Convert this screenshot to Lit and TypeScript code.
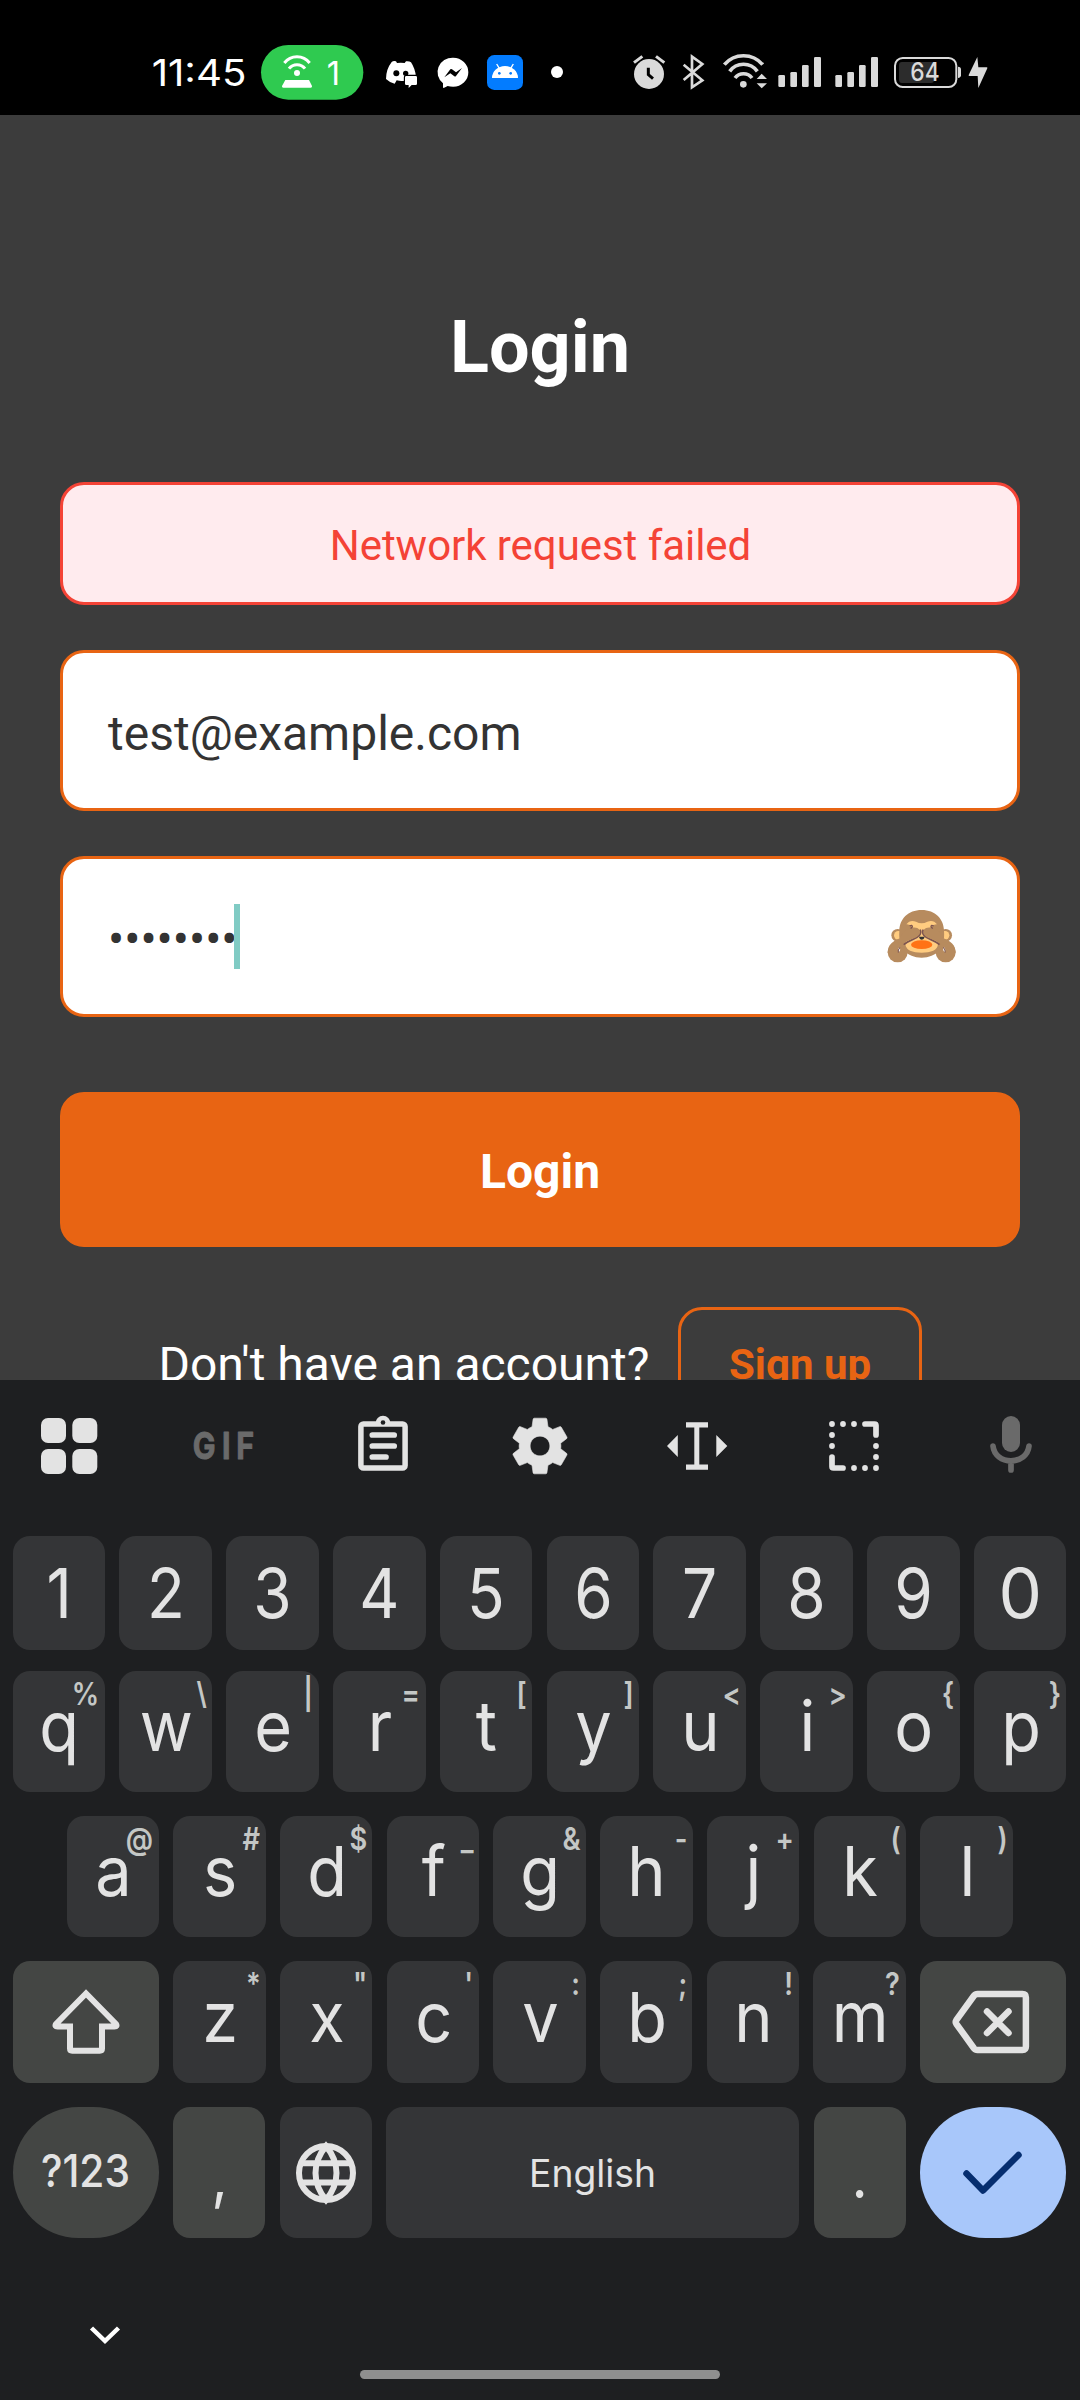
import { LitElement, html, svg, css, TemplateResult } from "lit";
import { customElement, property } from "lit/decorators.js";
import { styleMap } from "lit/directives/style-map.js";

/* ---------- status bar ---------- */

@customElement("status-bar")
class StatusBar extends LitElement {
  static styles = css`
    :host {
      display: flex;
      height: 115px;
      box-sizing: border-box;
      padding: 45px 0 0 150px;
      background: #000;
    }
    svg {
      display: block;
      flex: none;
    }
    text {
      font-family: Inter, Roboto, sans-serif;
    }
  `;

  /* one slice of the bar, from px a to px b, in a 3x finer coordinate system */
  private slice(a: number, b: number, origin: number, body: TemplateResult) {
    return html`<svg
      width=${b - a}
      height="55"
      viewBox="${(a - origin) * 3} 45 ${(b - a) * 3} 165"
    >
      ${body}
    </svg>`;
  }

  private bars(dx: number) {
    return svg`<g fill="#dadada" transform="translate(${dx} 0)">
      <rect x="595" y="135" width="20" height="36" rx="4" />
      <rect x="631" y="126" width="20" height="45" rx="4" />
      <rect x="666" y="105" width="20" height="66" rx="4" />
      <rect x="702" y="81" width="21" height="90" rx="4" />
    </g>`;
  }

  render() {
    const L = 130;
    const R = 580;
    return html`
      ${this.slice(150, 255, L, svg`<text x="65" y="167" font-size="110" fill="#fff" font-weight="400" textLength="284" lengthAdjust="spacingAndGlyphs">11:45</text>`)}
      ${this.slice(255, 375, L, svg`
        <rect x="393" y="45" width="307" height="164" rx="82" fill="#2fca50" />
        <g fill="none" stroke="#fff" stroke-width="9">
          <path d="M463 99A48 48 0 0 1 539 99" />
          <path d="M477 116A30 30 0 0 1 525 116" />
        </g>
        <circle cx="501" cy="129" r="9" fill="#fff" />
        <path d="M466 150H537L546 168Q547 173 542 173H460Q455 173 456 168Z" fill="#fff" />
        <text x="590" y="166" font-size="98" fill="#fff" font-weight="400">1</text>`)}
      ${this.slice(375, 427, L, svg`
        <path d="M785 96Q790 92 798 94L801 99Q812 97 824 99L828 94Q838 93 843 97Q855 115 858 140H824V152Q812 154 800 151L794 161Q778 157 768 147Q768 118 785 96Z" fill="#fff" />
        <circle cx="799" cy="130" r="9" /><circle cx="827" cy="130" r="8" />
        <path d="M829 138H857Q861 138 861 142V161Q861 165 857 165H845L836 174V165H829Q825 165 825 161V142Q825 138 829 138Z" fill="#fff" stroke="#000" stroke-width="7" paint-order="stroke" />`)}
      ${this.slice(427, 478, L, svg`
        <path d="M969.5 83A45.500 43.500 0 0 1 969.500 170Q960 170 953 168L941 174Q939 174 939 171V160A45.500 43.500 0 0 1 969.500 83Z" fill="#fff" />
        <path d="M943 142L961 118Q963 116 966 118L978 127L996 114L978 138Q976 141 973 139L961 130Z" fill="#000" />`)}
      ${this.slice(478, 535, L, svg`
        <rect x="1071" y="75" width="108" height="105" rx="22" fill="#037cff" />
        <path d="M1086 144A39 36 0 0 1 1164 144Z" fill="#fff" />
        <path d="M1100 102L1108 115M1150 102L1142 115" stroke="#fff" stroke-width="4" />
        <circle cx="1108" cy="130" r="4" fill="#037cff" /><circle cx="1142" cy="130" r="4" fill="#037cff" />`)}
      ${this.slice(535, 585, L, svg`<circle cx="1281" cy="126" r="18" fill="#fff" />`)}
      ${this.slice(585, 673, R, svg`
        <circle cx="207" cy="132" r="45" fill="#dadada" />
        <path d="M205 113V134L219 146" fill="none" stroke="#000" stroke-width="9" />
        <path d="M162 98L187 79M228 79L253 98" stroke="#dadada" stroke-width="9" />`)}
      ${this.slice(673, 713, R, svg`<path d="M311 104L367 151L336 172V80L367 102L311 150" fill="none" stroke="#dadada" stroke-width="8" />`)}
      ${this.slice(713, 772, R, svg`
        <g fill="none" stroke="#dadada" stroke-width="11">
          <path d="M433 104A75 75 0 0 1 548 104" />
          <path d="M449 124A51 51 0 0 1 532 124" />
          <path d="M465 144A32 32 0 0 1 516 144" />
        </g>
        <circle cx="490" cy="163" r="10" fill="#dadada" />
        <path d="M545 131L530 147H561ZM530 160H561L545 175Z" fill="#dadada" stroke="#000" stroke-width="6" paint-order="stroke" />`)}
      ${this.slice(772, 828, R, this.bars(0))}
      ${this.slice(828, 885, R, this.bars(171))}
      ${this.slice(885, 964, R, svg`
        <rect x="957" y="96" width="105" height="63" rx="9" fill="#2c2c2c" />
        <rect x="945" y="84" width="184" height="87" rx="23" fill="none" stroke="#dadada" stroke-width="6" />
        <path d="M1134 110Q1143 111 1143 118V136Q1143 143 1134 144Z" fill="#dadada" />
        <text x="991" y="154" font-size="75" fill="#dadada" font-weight="500" textLength="88" lengthAdjust="spacingAndGlyphs">64</text>`)}
      ${this.slice(964, 995, R, svg`<path d="M1192 81L1166 135Q1165 138 1168 138H1193L1195 174L1222 115Q1223 112 1220 112H1195Z" fill="#dadada" />`)}
    `;
  }
}

/* ---------- login form ---------- */

@customElement("login-form")
class LoginForm extends LitElement {
  static styles = css`
    :host {
      display: flex;
      flex-direction: column;
      box-sizing: border-box;
      height: 1265px;
      overflow: hidden;
      padding: 0 60px;
      background: #3c3c3c;
      font-family: Roboto, sans-serif;
      color: #fff;
    }
    .title {
      margin: 191px 0 92px;
      height: 84px;
      line-height: 84px;
      font-size: 72px;
      font-weight: 700;
      text-align: center;
    }
    .box {
      display: flex;
      align-items: center;
      box-sizing: border-box;
      flex: none;
      border: 3px solid #e86413;
      border-radius: 24px;
    }
    .error {
      height: 123px;
      justify-content: center;
      border-color: #f44336;
      background: #ffebee;
      color: #f44336;
      font-size: 42px;
      letter-spacing: -0.05px;
      padding: 3px 0 0 1px;
    }
    .field {
      height: 161px;
      margin-top: 45px;
      padding: 0 59px 0 45px;
      background: #fff;
      color: #333;
      font-size: 48px;
    }
    .value {
      padding-top: 5px;
    }
    .caret {
      width: 6px;
      height: 65px;
      margin-left: -3.5px;
      background: #80cbc4;
    }
    .eye {
      margin-left: auto;
      display: flex;
    }
    .submit {
      height: 155px;
      margin-top: 75px;
      justify-content: center;
      background: #e86413;
      font-size: 48px;
      font-weight: 700;
      padding-top: 3px;
    }
    .signup {
      display: flex;
      justify-content: center;
      align-items: center;
      gap: 29px;
      margin-top: 60px;
      flex: none;
      height: 115px;
      font-size: 48px;
    }
    .link {
      height: 115px;
      padding: 0 47.5px;
      color: #e86413;
      font-size: 42px;
      font-weight: 700;
    }
  `;

  private arm() {
    return svg`
      <path d="M182 150C188 163 177 172 159 180C142 187 124 196 118 217" fill="none" stroke="#7d5550" stroke-width="6" />
      <path d="M85 218C86 196 100 184 122 176C130 158 140 145 158 144C176 140 186 152 181 163C175 175 155 178 140 186C124 195 114 206 117 218Z" fill="#b78b5e" />
      <circle cx="115" cy="218" r="30" fill="#b78b5e" />
      <path d="M118 218Q113 210 120 203Q126 210 118 218Z" fill="#fff" />
      <path d="M122 203Q115 210 117 219" fill="none" stroke="#7d5550" stroke-width="3" />
      <path d="M151 139Q159 134 159 141L154 147" fill="none" stroke="#7d5550" stroke-width="4" />
    `;
  }

  render() {
    return html`
      <div class="title">Login</div>
      <div class="box error">Network request failed</div>
      <div class="box field"><span class="value">test@example.com</span></div>
      <div class="box field">
        <span class="value">••••••••</span>
        <span class="caret"></span>
        <span class="eye">
          <svg width="71.7" height="56.7" viewBox="80 85 215 170">
            <g fill="#b78b5e">
              <circle cx="115" cy="167" r="19" />
              <circle cx="259" cy="167" r="19" />
            </g>
            <g fill="#ffcc80">
              <circle cx="117" cy="167" r="13" />
              <circle cx="257" cy="167" r="13" />
            </g>
            <path d="M187 91C228 91 254 118 254 155C258 205 232 234 187 234C142 234 116 205 120 155C120 118 146 91 187 91Z" fill="#b78b5e" />
            <path d="M141 134Q152 119 170 126Q187 136 204 126Q222 119 233 134Q222 133 216 142L204 150V165H170V150L158 142Q152 133 141 134Z" fill="#ffcc80" />
            <path d="M187 160C215 160 236 180 236 194C236 212 214 219 187 219C160 219 138 212 138 194C138 180 160 160 187 160Z" fill="#ffcc80" />
            ${this.arm()}
            <g transform="translate(374 0) scale(-1 1)">${this.arm()}</g>
            <ellipse cx="187" cy="195" rx="32" ry="13" fill="#ff7216" />
            <path d="M179 171H196Q194 180 187.500 180Q181 180 179 171Z" fill="#333" />
          </svg>
        </span>
      </div>
      <div class="box submit">Login</div>
      <div class="signup">
        <span>Don't have an account?</span>
        <span class="box link">Sign up</span>
      </div>
    `;
  }
}

/* ---------- keyboard ---------- */

@customElement("key-cap")
class KeyCap extends LitElement {
  @property() label = "";
  @property() hint = "";
  @property({ type: Number }) stretch = 0.94;

  static styles = css`
    :host {
      display: flex;
      position: relative;
      flex: 1 1 0;
      min-width: 0;
      align-items: center;
      justify-content: center;
      box-sizing: border-box;
      height: 100%;
      border-radius: 17px;
      background: #343537;
      color: #e3e3e3;
      font-family: Inter, Roboto, sans-serif;
      font-size: 69px;
      line-height: 1;
    }
    :host([letter]) {
      padding: 0 0 10px 1px;
    }
    :host([dim]) {
      background: #444644;
    }
    :host([mark]) {
      font-size: 60px;
      padding-top: 7px;
    }
    :host([wide]) {
      flex: 0 0 146.6px;
    }
    :host([pill]) {
      border-radius: 66px;
    }
    :host([space]) {
      flex: 0 0 413.6px;
    }
    :host([enter]) {
      background: #a8c7fa;
    }
    .hint {
      position: absolute;
      top: 3px;
      right: 5.5px;
      font-size: 31px;
      line-height: 40px;
      font-weight: 600;
      color: #c4c7c5;
      transform: scaleX(0.88);
      transform-origin: right;
    }
  `;

  render() {
    return html`
      ${this.hint ? html`<span class="hint">${this.hint}</span>` : ""}
      ${this.label
        ? html`<span style=${styleMap({ transform: `scaleX(${this.stretch})` })}>${this.label}</span>`
        : html`<slot></slot>`}
    `;
  }
}

const NUMBERS = "1234567890".split("");
const TOP = ["q%", "w\\", "e|", "r=", "t[", "y]", "u<", "i>", "o{", "p}"];
const HOME = ["a@", "s#", "d$", "f_", "g&", "h-", "j+", "k(", "l)"];
const BOTTOM = ["z*", 'x"', "c'", "v:", "b;", "n!", "m?"];

@customElement("soft-keyboard")
class SoftKeyboard extends LitElement {
  static styles = css`
    :host {
      display: flex;
      flex-direction: column;
      height: 1020px;
      box-sizing: border-box;
      background: #1e1f21;
    }
    svg {
      display: block;
      flex: none;
    }
    text {
      font-family: Inter, Roboto, sans-serif;
    }
    .tools {
      display: flex;
      justify-content: space-between;
      align-items: center;
      height: 132px;
      padding: 0 35.5px 0 34.5px;
      margin-bottom: 24px;
    }
    .row {
      display: flex;
      gap: 14.3px;
      padding: 0 13.5px 0 12.5px;
      height: 121px;
      margin-bottom: 24px;
    }
    .numbers {
      height: 114px;
      margin-bottom: 21px;
    }
    .home {
      padding: 0 67.3px 0 66.5px;
    }
    .bottom {
      height: 122px;
    }
    .actions {
      height: 131px;
      margin-bottom: 84px;
    }
    .hide {
      padding-left: 88px;
    }
    .handle {
      width: 360px;
      height: 9px;
      margin: 24px auto 0;
      border-radius: 5px;
      background: #8f8f8f;
    }
  `;

  private tool(body: TemplateResult) {
    return html`<svg width="68" height="68" viewBox="0 0 68 68">${body}</svg>`;
  }

  private letters(keys: string[]) {
    return keys.map((k) => html`<key-cap letter label=${k[0]} hint=${k[1]}></key-cap>`);
  }

  render() {
    const c = "#e3e3e3";
    const dots = [[12, 12], [23, 12], [34, 12], [12, 23], [12, 34], [56, 34], [56, 45], [34, 56], [45, 56], [56, 56]];
    return html`
      <div class="tools">
        ${this.tool(svg`<g fill=${c}>
          <rect x="6" y="6" width="25" height="25" rx="7" /><rect x="37.300" y="6" width="25" height="25" rx="7" />
          <rect x="6" y="37" width="25" height="25" rx="7" /><rect x="37.300" y="37" width="25" height="25" rx="7" />
        </g>`)}
        ${this.tool(svg`<text transform="scale(0.82 1)" x="1 36.500 54" y="47.500" font-size="37" font-weight="700" fill="#6a6a6a" stroke="#6a6a6a" stroke-width="1" stroke-linejoin="round">GIF</text>`)}
        ${this.tool(svg`
          <rect x="11.900" y="12" width="44.200" height="44" rx="2.500" fill="none" stroke=${c} stroke-width="5.500" />
          <path d="M34 3.700A7.500 7.500 0 0 1 41.500 11.200H26.500A7.500 7.500 0 0 1 34 3.700Z" fill=${c} />
          <circle cx="34" cy="10.500" r="2.300" fill="#1e1f21" />
          <path d="M23.300 23H45.200M23.300 34H45.200M23.300 45H37" stroke=${c} stroke-width="5.700" stroke-linecap="round" />`)}
        ${this.tool(svg`<path transform="translate(-0.800 -0.800) scale(2.900)" fill=${c} stroke=${c} stroke-width="0.200" stroke-linejoin="round" d="M19.140 12.940c.04-.3.06-.61.06-.94 0-.32-.02-.64-.07-.94l2.030-1.580c.18-.14.23-.41.12-.61l-1.920-3.320c-.12-.22-.37-.29-.59-.22l-2.390.96c-.5-.38-1.030-.7-1.620-.94l-.36-2.540c-.04-.24-.24-.41-.48-.41h-3.840c-.24 0-.43.17-.47.41l-.36 2.540c-.59.24-1.130.57-1.620.94l-2.390-.96c-.22-.08-.47 0-.59.22L2.740 8.870c-.12.21-.08.47.12.61l2.030 1.580c-.05.3-.09.63-.09.94s.02.64.07.94l-2.030 1.580c-.18.14-.23.41-.12.61l1.920 3.320c.12.22.37.29.59.22l2.390-.96c.5.38 1.030.7 1.620.94l.36 2.540c.05.24.24.41.48.41h3.840c.24 0 .44-.17.47-.41l.36-2.540c.59-.24 1.130-.56 1.620-.94l2.390.96c.22.08.47 0 .59-.22l1.920-3.320c.12-.22.07-.47-.12-.61l-2.010-1.580zM12 15.400c-1.900 0-3.400-1.500-3.400-3.400s1.500-3.400 3.400-3.400 3.400 1.500 3.400 3.400-1.500 3.400-3.400 3.400z" />`)}
        ${this.tool(svg`<path fill=${c} d="M4 34L14.800 23V45ZM64.300 34L53.300 23V45ZM23 10.300H45V15.500H36.300V52.500H45V57.700H23V52.500H31.300V15.500H23Z" />`)}
        ${this.tool(svg`
          ${dots.map(([x, y]) => svg`<circle cx=${x} cy=${y} r="2.900" fill=${c} />`)}
          <path d="M12 45V54.500Q12 56 13.500 56H23M45 12H54.500Q56 12 56 13.500V23" fill="none" stroke=${c} stroke-width="5.700" stroke-linecap="round" />`)}
        ${this.tool(svg`
          <rect x="25" y="4" width="18" height="36" rx="9" fill="#6a6a6a" />
          <path d="M16 34C17 43.500 25 48.800 34 48.800S51 43.500 52 34M34 49V58" fill="none" stroke="#6a6a6a" stroke-width="5.700" stroke-linecap="round" />`)}
      </div>

      <div class="row numbers">
        ${NUMBERS.map((n) => html`<key-cap label=${n} stretch=${n === "0" ? 1 : 0.9}></key-cap>`)}
      </div>
      <div class="row">${this.letters(TOP)}</div>
      <div class="row home">${this.letters(HOME)}</div>
      <div class="row bottom">
        <key-cap dim wide>
          <svg width="72" height="72" viewBox="0 0 72 72">
            <path d="M36 7.500L6 38Q4.500 40.500 7.500 40.500H20V62.500Q20 64.700 22.200 64.700H49.800Q52 64.700 52 62.500V40.500H64.500Q67.500 40.500 66 38Z" fill="none" stroke=${c} stroke-width="6" />
          </svg>
        </key-cap>
        ${this.letters(BOTTOM)}
        <key-cap dim wide>
          <svg width="84" height="72" viewBox="0 0 84 72">
            <g transform="translate(0.500 0)" fill="none" stroke=${c} stroke-width="6.500" stroke-linecap="round">
              <path d="M26 8H71Q74.400 8 74.400 11.400V60.600Q74.400 64 71 64H26Q23.800 64 22.400 62.200L4.800 37.800Q3.600 36 4.800 34.200L22.400 9.800Q23.800 8 26 8Z" />
              <path d="M35.500 25.500L57 47M57 25.500L35.500 47" />
            </g>
          </svg>
        </key-cap>
      </div>
      <div class="row actions">
        <key-cap dim wide pill>
          <svg width="100" height="60" viewBox="0 0 100 60">
            <text x="5" y="44" font-size="45" font-weight="500" fill=${c} textLength="89" lengthAdjust="spacingAndGlyphs">?123</text>
          </svg>
        </key-cap>
        <key-cap dim mark label=","></key-cap>
        <key-cap>
          <svg width="64" height="64" viewBox="0 0 64 64">
            <g fill="none" stroke=${c} stroke-width="6">
              <circle cx="32" cy="32" r="27" />
              <path d="M32 5C18 22 18 42 32 59C46 42 46 22 32 5ZM6.500 22.300H57.500M6.500 41.400H57.500" />
            </g>
          </svg>
        </key-cap>
        <key-cap space>
          <svg width="140" height="60" viewBox="0 0 140 60">
            <text x="6" y="43.500" font-size="37.500" fill=${c} textLength="127" lengthAdjust="spacingAndGlyphs">English</text>
          </svg>
        </key-cap>
        <key-cap dim mark label="."></key-cap>
        <key-cap wide pill enter>
          <svg width="72" height="72" viewBox="0 0 72 72">
            <path d="M9.500 36.500L26 53.500L61.500 18" fill="none" stroke="#062e6f" stroke-width="6.500" stroke-linecap="round" stroke-linejoin="round" />
          </svg>
        </key-cap>
      </div>

      <div class="hide">
        <svg width="34" height="24" viewBox="0 0 34 24">
          <path d="M3.500 6L17 19L30.500 6" fill="none" stroke="#fff" stroke-width="4.500" />
        </svg>
      </div>
      <div class="handle"></div>
    `;
  }
}

@customElement("app-root")
class AppRoot extends LitElement {
  static styles = css`
    :host {
      display: block;
      width: 1080px;
      height: 2400px;
      overflow: hidden;
      background: #1e1f21;
    }
  `;

  render() {
    return html`
      <status-bar></status-bar>
      <login-form></login-form>
      <soft-keyboard></soft-keyboard>
    `;
  }
}
